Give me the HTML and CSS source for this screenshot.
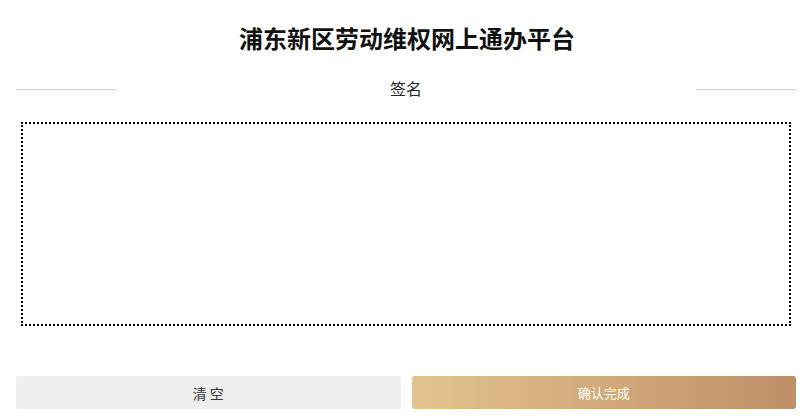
FILE: index.html
```html
<!DOCTYPE html>
<html lang="zh-CN">
<head>
<meta charset="utf-8">
<title>签名</title>
<link rel="stylesheet" href="styles.css">
</head>
<body>
<div class="page">
  <h1 class="title">浦东新区劳动维权网上通办平台</h1>
  <div class="divider">
    <span class="line"></span>
    <span class="label">签名</span>
    <span class="line"></span>
  </div>
  <div class="sign-box"></div>
  <div class="actions">
    <button class="btn btn-clear">清 空</button>
    <button class="btn btn-confirm">确认完成</button>
  </div>
</div>
</body>
</html>
```
FILE: styles.css
```css
html, body {
  margin: 0;
  padding: 0;
  background: #ffffff;
}
body {
  font-family: "Noto Sans CJK SC", "Noto Sans", sans-serif;
  color: #222;
}
.page {
  padding: 18px 4px 0 16px;
}
.title {
  margin: 0;
  font-size: 24px;
  line-height: 40px;
  font-weight: 700;
  text-align: center;
  color: #111;
  padding-left: 2px;
}
.divider {
  display: flex;
  align-items: center;
  margin-top: 18px;
  height: 24px;
}
.line {
  width: 100px;
  height: 1px;
  background: #d6d6d6;
  border-bottom: 1px solid #f1f1f1;
  margin-top: 3px;
}
.label {
  flex: 1;
  text-align: center;
  font-size: 16px;
  line-height: 24px;
  color: #222;
}
.sign-box {
  margin: 22px 5px 0 5px;
  height: 200px;
  border: 2px dotted #000;
}
.actions {
  display: flex;
  gap: 11px;
  margin-top: 50px;
}
.btn {
  flex: 1;
  height: 33px;
  border: none;
  border-radius: 3px;
  font-family: "Noto Sans CJK SC", "Noto Sans", sans-serif;
  cursor: pointer;
  padding: 0;
}
.btn-clear {
  background: #efefef;
  color: #333;
  font-size: 14px;
  border-radius: 2px;
}
.btn-confirm {
  background: linear-gradient(to right, #e3c48e, #bf8f68);
  color: #fff;
  font-size: 13px;
}
```
